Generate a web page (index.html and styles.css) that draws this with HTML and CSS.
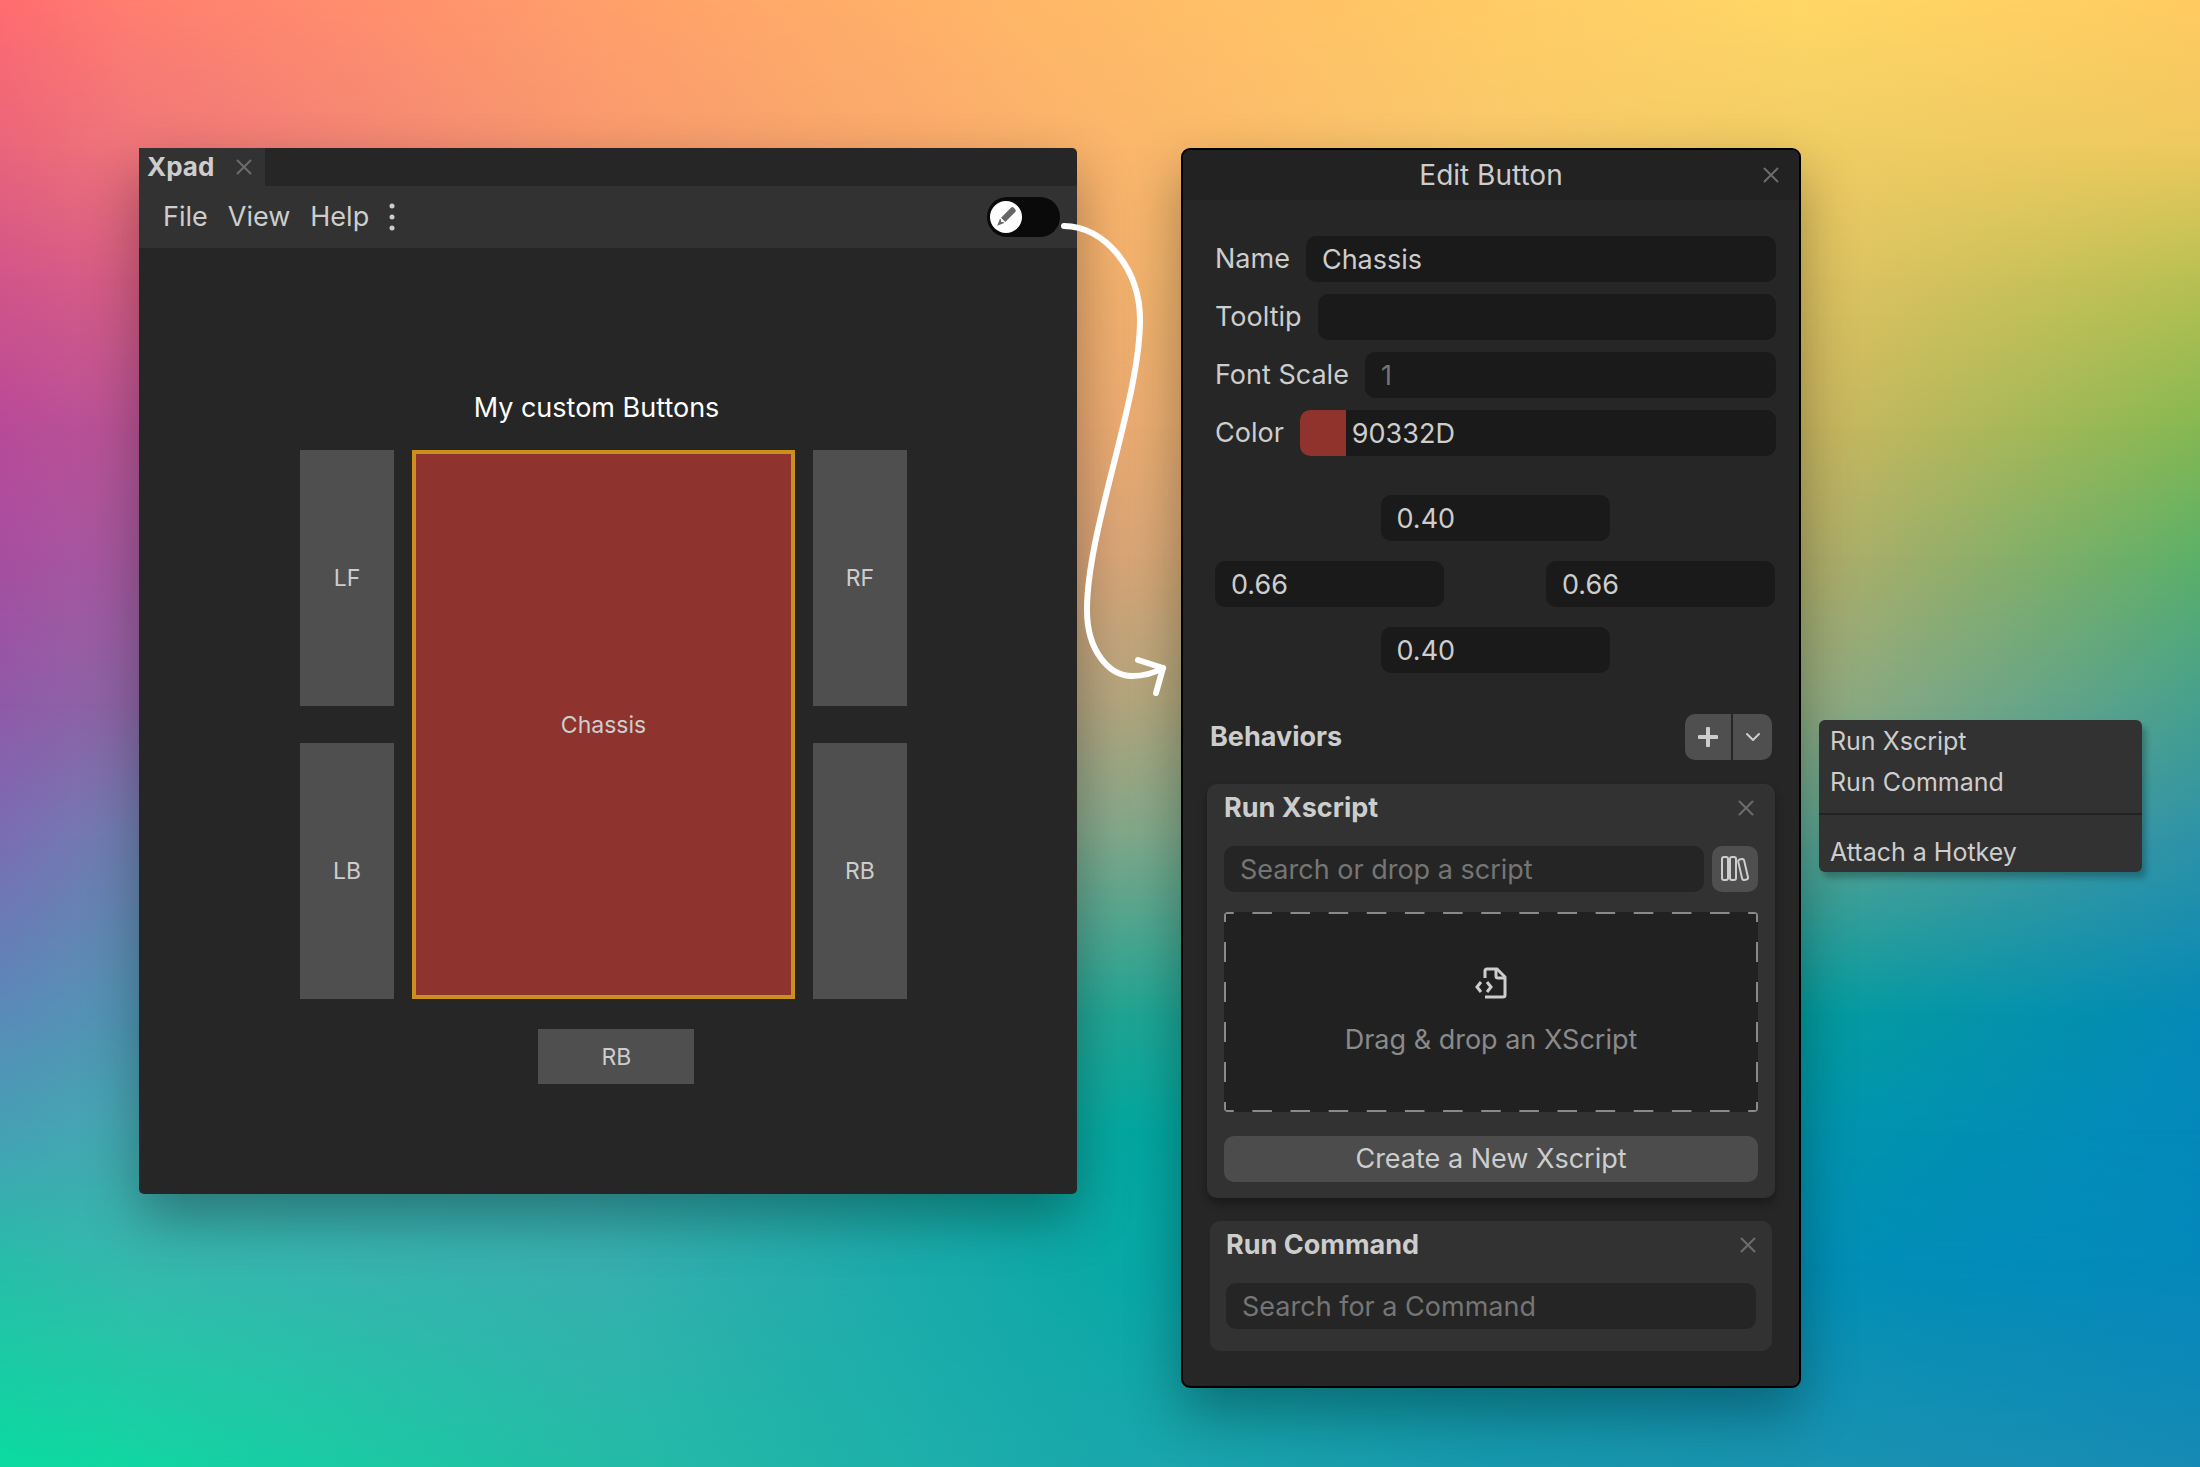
FILE: index.html
```html
<!DOCTYPE html>
<html lang="en">

<head>
    <meta charset="UTF-8">
    <meta name="viewport" content="width=device-width, initial-scale=1.0">
    <title>Xpad</title>
    <link rel="stylesheet" href="styles.css">
</head>

<body>
    <svg class="defs" aria-hidden="true">
        <symbol id="close" viewBox="0 0 16 16">
            <path d="M1.500 1.500L14.500 14.500M14.500 1.500L1.500 14.500" fill="none" stroke="currentColor" stroke-width="2" stroke-linecap="round" />
        </symbol>
    </svg>

    <!-- each layer is one row of the colour mesh, faded in from the top -->
    <div class="mesh" aria-hidden="true">
        <div class="row r0"></div>
        <div class="row r1"></div>
        <div class="row r2"></div>
        <div class="row r3"></div>
        <div class="row r4"></div>
        <div class="row r5"></div>
        <div class="row r6"></div>
        <div class="row r7"></div>
        <div class="row r8"></div>
        <div class="row r9"></div>
        <div class="row r10"></div>
    </div>

    <main>
        <section class="window">
            <div class="tabs">
                <div class="tab">
                    <span>Xpad</span>
                    <button class="close" aria-label="Close tab"><svg><use href="#close" /></svg></button>
                </div>
            </div>
            <div class="toolbar">
                <button>File</button>
                <button>View</button>
                <button>Help</button>
                <button aria-label="More">
                    <svg class="dots" viewBox="0 0 6 28">
                        <circle cx="3" cy="3" r="2.500" />
                        <circle cx="3" cy="14" r="2.500" />
                        <circle cx="3" cy="25" r="2.500" />
                    </svg>
                </button>
                <label class="toggle">
                    <input type="checkbox" aria-label="Edit mode">
                    <svg viewBox="0 0 32 32">
                        <circle cx="16" cy="16" r="16" fill="#fff" />
                        <g fill="#666" transform="rotate(45 16 16)">
                            <path d="M13 6a2 2 0 0 1 2-2h2a2 2 0 0 1 2 2v14h-6z" />
                            <path d="M13 21.500h1.500l1.500 1.500 1.500-1.500h1.500l-3 7z" />
                        </g>
                    </svg>
                </label>
            </div>
            <div class="canvas">
                <h2>My custom Buttons</h2>
                <div class="pad">
                    <button class="lf">LF</button>
                    <button class="chassis">Chassis</button>
                    <button class="rf">RF</button>
                    <button class="lb">LB</button>
                    <button class="rb">RB</button>
                    <button class="extra">RB</button>
                </div>
            </div>
            <svg class="arrow" viewBox="1057 216 120 490" aria-hidden="true">
                <path d="M1064 226C1104 226 1140 268 1140 320C1140 400 1087 530 1087 610C1087 652 1110 676 1132 676C1144 676 1154 673 1163 668" />
                <path d="M1138 660L1163 668L1156 693" />
            </svg>
        </section>

        <section class="editor">
            <header>
                <h1>Edit Button</h1>
                <button class="close" aria-label="Close editor"><svg><use href="#close" /></svg></button>
            </header>

            <div class="fields">
                <div class="field">
                    <label for="name">Name</label>
                    <input type="text" id="name" value="Chassis">
                </div>
                <div class="field">
                    <label for="tooltip">Tooltip</label>
                    <input type="text" id="tooltip">
                </div>
                <div class="field">
                    <label for="scale">Font Scale</label>
                    <input type="text" id="scale" placeholder="1">
                </div>
                <div class="field">
                    <label for="hex">Color</label>
                    <div class="color">
                        <input type="color" value="#90332d" aria-label="Pick a color">
                        <input type="text" id="hex" value="90332D">
                    </div>
                </div>
            </div>

            <div class="anchors">
                <input type="text" class="top" value="0.40" aria-label="Top">
                <div class="sides">
                    <input type="text" value="0.66" aria-label="Left">
                    <input type="text" value="0.66" aria-label="Right">
                </div>
                <input type="text" class="bottom" value="0.40" aria-label="Bottom">
            </div>

            <div class="behaviors">
                <h2>Behaviors</h2>
                <div class="split">
                    <button class="add" aria-label="Add behavior">
                        <svg viewBox="0 0 20 20"><path d="M10 1.500V18.500M1.500 10H18.500" stroke-width="4" /></svg>
                    </button>
                    <button class="more" aria-label="Choose behavior">
                        <svg viewBox="0 0 20 20"><path d="M4 7L10 13L16 7" stroke-width="2" /></svg>
                    </button>
                </div>
            </div>

            <div class="card raised">
                <div class="card-head">
                    <h3>Run Xscript</h3>
                    <button class="close" aria-label="Remove Run Xscript"><svg><use href="#close" /></svg></button>
                </div>
                <div class="search">
                    <input type="text" placeholder="Search or drop a script" aria-label="Script">
                    <button class="library" aria-label="Browse library">
                        <svg viewBox="0 0 28 26">
                            <rect x="1" y="1" width="6" height="23" rx="2" />
                            <rect x="9" y="1" width="6" height="23" rx="2" />
                            <rect x="19" y="3" width="6" height="21" rx="2" transform="rotate(-13 22 13)" />
                        </svg>
                    </button>
                </div>
                <div class="drop">
                    <svg viewBox="0 0 32 32">
                        <path d="M10 11V4a2 2 0 0 1 2-2H22L30 10V28a2 2 0 0 1-2 2H10" />
                        <path d="M21 2V9a2 2 0 0 0 2 2H30" />
                        <path d="M6 15L2 20L6 25M12 15L16 20L12 25" />
                    </svg>
                    <p>Drag &amp; drop an XScript</p>
                </div>
                <button class="create">Create a New Xscript</button>
            </div>

            <div class="card">
                <div class="card-head">
                    <h3>Run Command</h3>
                    <button class="close" aria-label="Remove Run Command"><svg><use href="#close" /></svg></button>
                </div>
                <div class="search">
                    <input type="text" placeholder="Search for a Command" aria-label="Command">
                </div>
            </div>
        </section>

        <div class="menu">
            <button>Run Xscript</button>
            <button>Run Command</button>
            <hr>
            <button>Attach a Hotkey</button>
        </div>
    </main>
</body>

</html>
```

FILE: styles.css
```css
* {
    box-sizing: border-box;
}

body {
    margin: 0;
    min-height: 100vh;
    position: relative;
    font-family: Inter, "Liberation Sans", sans-serif;
    font-size: 27px;
    line-height: 34px;
    color: #cdcdcd;
}

h1,
h2,
h3,
p {
    margin: 0;
    font-size: 27px;
    font-weight: 400;
}

button,
input {
    font: inherit;
    color: inherit;
    border: none;
    padding: 0;
    margin: 0;
    background: none;
}

svg {
    display: block;
}

.defs {
    position: absolute;
    width: 0;
    height: 0;
}

/* background */

.mesh {
    position: absolute;
    inset: 0;
    z-index: -1;
    overflow: hidden;
}

.row {
    position: absolute;
    inset: 0;
}

.r0 {
    background: linear-gradient(90deg, #ff6c70, #ff7f70 6%, #ff9f6b 27%, #ffb768 46%, #ffc866 64%, #ffd866 82%, #ffcb61);
}

.r1 {
    background: linear-gradient(90deg, #ea657b, #f0757a 6%, #f8996e 27%, #fbb66b 51%, #f9c96a 68%, #f0cd64 83%, #eec95f);
    mask-image: linear-gradient(transparent 0%, #000 10%);
}

.r2 {
    background: linear-gradient(90deg, #d2558a, #d85f84 6%, #f0966e 27%, #f3b26e 51%, #e5c468 68%, #dfc362 83%, #b8c052);
    mask-image: linear-gradient(transparent 10%, #000 19%);
}

.r3 {
    background: linear-gradient(90deg, #b84a98, #bb5596 6%, #e09070 27%, #ecac72 51%, #d5bc68 68%, #cab860 83%, #86b852);
    mask-image: linear-gradient(transparent 19%, #000 29%);
}

.r4 {
    background: linear-gradient(90deg, #a74ea0, #a65a9f 6%, #cc9078 27%, #daa678 51%, #b8b068 68%, #b0ae6a 83%, #5cb068);
    mask-image: linear-gradient(transparent 29%, #000 38%);
}

.r5 {
    background: linear-gradient(90deg, #8f5aa8, #8e66a6 6%, #a89080 27%, #b4a67e 51%, #90a870 68%, #90aa80 83%, #46a08e);
    mask-image: linear-gradient(transparent 38%, #000 48%);
}

.r6 {
    background: linear-gradient(90deg, #7a6db2, #7080b2 6%, #80a090 27%, #82a98c 51%, #60a080 68%, #5aa292 83%, #2e93a8);
    mask-image: linear-gradient(transparent 48%, #000 57%);
}

.r7 {
    background: linear-gradient(90deg, #5a8ab8, #5296b5 6%, #40a5a8 27%, #22a694 51%, #00a098 68%, #049ca0 83%, #0589b6);
    mask-image: linear-gradient(transparent 57%, #000 69%);
}

.r8 {
    background: linear-gradient(90deg, #46a0b5, #44a9b2 6%, #38adae 27%, #04a8a0 51%, #00a0a0 68%, #0095ae 83%, #0488bb);
    mask-image: linear-gradient(transparent 69%, #000 77%);
}

.r9 {
    background: linear-gradient(90deg, #28bda9, #36b8ad 6%, #38afb0 27%, #08a8a6 51%, #0098a8 68%, #008fb6 83%, #0488bb);
    mask-image: linear-gradient(transparent 77%, #000 86%);
}

.r10 {
    background: linear-gradient(90deg, #0bdba0, #12d6a2 6%, #24bca6 27%, #1ba8ac 49%, #1898ac 68%, #1a92b0 83%, #168ab4);
    mask-image: linear-gradient(transparent 86%, #000 100%);
}

/* layout */

main {
    display: flex;
    align-items: flex-start;
    padding: 148px 58px 79px 139px;
}

.window {
    position: relative;
    flex: 938 1 0;
    min-width: 0;
    margin-right: 104px;
    background: #262626;
    border-radius: 0 5px 5px 5px;
    box-shadow: 0 24px 56px rgba(0, 0, 0, 0.32);
}

.editor {
    flex: 616 1 0;
    min-width: 0;
    margin-right: 18px;
    border: 2px solid #000;
    border-radius: 9px;
    background: #262626;
    box-shadow: 0 24px 56px rgba(0, 0, 0, 0.32);
    padding-bottom: 35px;
}

.menu {
    flex: 323 1 0;
    min-width: 0;
    margin-top: 572px;
    background: #323232;
    border-radius: 6px;
    box-shadow: 4px 6px 6px rgba(0, 0, 0, 0.25);
}

/* xpad window */

.tabs {
    height: 38px;
}

.tab {
    display: flex;
    align-items: center;
    gap: 22px;
    width: 126px;
    height: 38px;
    padding-left: 8px;
    background: #323232;
    font-size: 26px;
    font-weight: 700;
}

.close {
    color: #6c6c6c;
}

.close svg {
    width: 16px;
    height: 16px;
}

.toolbar {
    display: flex;
    align-items: center;
    gap: 20px;
    height: 62px;
    padding: 0 17px 0 24px;
    background: #323232;
}

.dots {
    width: 6px;
    height: 28px;
    fill: #cdcdcd;
}

.toggle {
    display: grid;
    align-items: center;
    margin-left: auto;
}

.toggle input,
.toggle svg {
    grid-area: 1 / 1;
}

.toggle input {
    appearance: none;
    width: 73px;
    height: 40px;
    border-radius: 20px;
    background: #0b0a0b;
}

.toggle svg {
    width: 32px;
    height: 32px;
    margin-left: 3px;
}

.canvas {
    padding: 143px 170px 110px 161px;
}

.canvas h2 {
    color: #fff;
    text-align: center;
    margin-bottom: 25px;
    padding-right: 14px;
}

.canvas button {
    background: #4f4f4f;
    font-size: 23px;
}

.pad {
    display: grid;
    grid-template: "lf chassis rf" 256px "lb chassis rb" 256px / 94fr 382fr 94fr;
    gap: 37px 18px;
}

.lf {
    grid-area: lf;
}

.lb {
    grid-area: lb;
}

.rf {
    grid-area: rf;
}

.rb {
    grid-area: rb;
}

.pad .chassis {
    grid-area: chassis;
    background: #8e332e;
    border: 4px solid #ca8f1c;
}

.extra {
    grid-column: 2;
    width: 156px;
    height: 55px;
    margin: -7px 0 0 33%;
}

.arrow {
    position: absolute;
    left: calc(100% - 20px);
    top: 68px;
    width: 120px;
    height: 490px;
    fill: none;
    stroke: #fff;
    stroke-width: 6px;
    stroke-linecap: round;
    stroke-linejoin: round;
}

/* editor */

header {
    display: flex;
    align-items: center;
    height: 50px;
    padding: 0 20px 0 36px;
    background: #222;
    border-radius: 7px 7px 0 0;
}

header h1 {
    flex: 1;
    font-size: 28px;
    text-align: center;
}

.editor input[type="text"] {
    flex: 1;
    min-width: 0;
    height: 46px;
    padding: 0 16px;
    border-radius: 10px;
    background: #1a1a1a;
}

.editor input::placeholder {
    color: #757575;
    opacity: 1;
}

.fields {
    display: flex;
    flex-direction: column;
    gap: 12px;
    padding: 36px 23px 0 32px;
}

.field {
    display: flex;
    align-items: center;
    gap: 16px;
}

.color {
    display: flex;
    flex: 1;
    overflow: hidden;
    border-radius: 10px;
    background: #1a1a1a;
}

.color input[type="color"] {
    appearance: none;
    width: 46px;
    height: 46px;
}

.color input::-webkit-color-swatch-wrapper {
    padding: 0;
}

.color input::-webkit-color-swatch {
    border: none;
    border-radius: 0;
}

.editor .color input[type="text"] {
    padding: 0 6px;
}

.anchors {
    display: flex;
    flex-direction: column;
    gap: 20px;
    padding: 39px 24px 0 32px;
}

.editor .anchors input {
    flex: none;
    width: 229px;
}

.anchors .top,
.anchors .bottom {
    align-self: center;
}

.sides {
    display: flex;
    justify-content: space-between;
}

.behaviors {
    display: flex;
    align-items: center;
    justify-content: space-between;
    padding: 41px 27px 24px 27px;
}

.behaviors h2,
.card h3 {
    font-weight: 700;
}

.split {
    display: flex;
    gap: 2px;
}

.split button {
    display: grid;
    place-items: center;
    height: 46px;
    background: #4f4f4f;
}

.split svg {
    width: 20px;
    height: 20px;
    fill: none;
    stroke: #cdcdcd;
    stroke-linecap: round;
    stroke-linejoin: round;
}

.split .add {
    width: 46px;
    border-radius: 10px 0 0 10px;
}

.split .more {
    width: 39px;
    border-radius: 0 10px 10px 0;
}

.card {
    margin: 0 27px;
    padding: 7px 16px 22px;
    border-radius: 10px;
    background: #323232;
}

.raised {
    margin: 0 24px 23px;
    padding: 7px 17px 16px;
    box-shadow: 0 6px 8px rgba(0, 0, 0, 0.3);
}

.card-head {
    display: flex;
    align-items: center;
    justify-content: space-between;
    margin-bottom: 21px;
}

.raised .card-head {
    padding-right: 4px;
}

.search {
    display: flex;
    gap: 8px;
}

.editor .search input {
    background: #252525;
}

.library {
    display: grid;
    place-items: center;
    width: 46px;
    height: 46px;
    border-radius: 10px;
    background: #4f4f4f;
}

.library svg {
    width: 28px;
    height: 26px;
    fill: none;
    stroke: #cdcdcd;
    stroke-width: 2px;
}

/* dashes are tiled so that a half dash meets every corner */
.drop {
    --h: linear-gradient(90deg, #8a8a8a 25%, transparent 25% 75%, #8a8a8a 75%);
    --v: linear-gradient(#8a8a8a 25%, transparent 25% 75%, #8a8a8a 75%);
    display: flex;
    flex-direction: column;
    align-items: center;
    gap: 24px;
    height: 200px;
    margin: 20px 0 24px;
    padding-top: 55px;
    border-radius: 4px;
    color: #8a8a8a;
    background:
        var(--h) 0 0 / 38px 2px round no-repeat,
        var(--h) 0 100% / 38px 2px round no-repeat,
        var(--v) 0 0 / 2px 40px no-repeat round,
        var(--v) 100% 0 / 2px 40px no-repeat round,
        #212121;
}

.drop svg {
    width: 32px;
    height: 32px;
    fill: none;
    stroke: #cdcdcd;
    stroke-width: 3px;
}

.create {
    display: block;
    width: 100%;
    height: 46px;
    border-radius: 10px;
    background: #4c4c4c;
}

/* menu */

.menu button {
    display: block;
    width: 100%;
    padding: 4px 11px 3px;
    text-align: left;
    font-size: 25px;
}

.menu hr {
    height: 2px;
    margin: 11px 0 16px;
    border: none;
    background: #222;
}
```
